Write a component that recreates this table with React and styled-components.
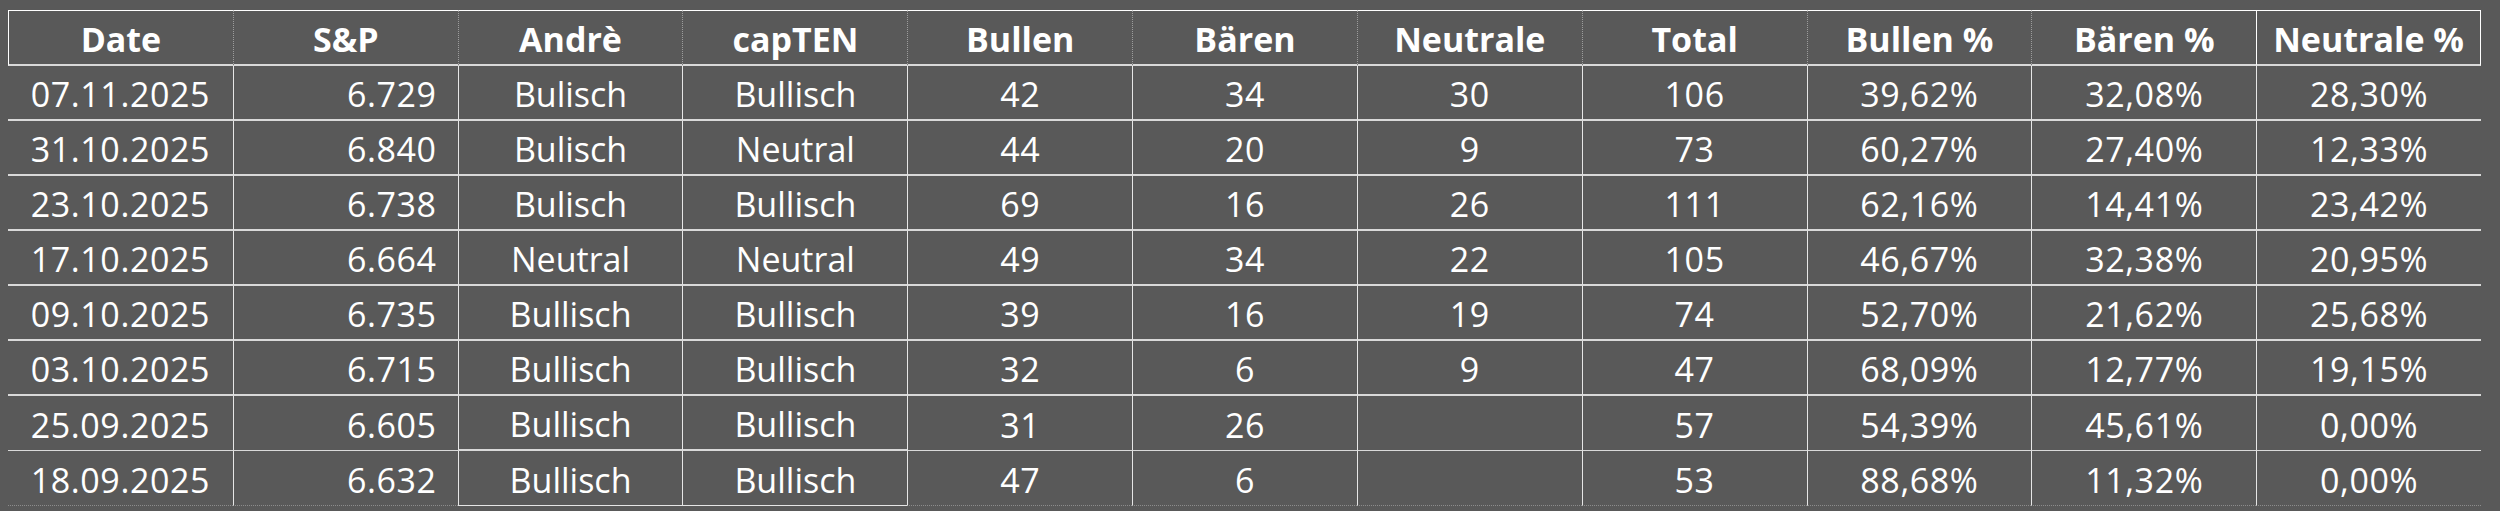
import React from "react";
import styled, { createGlobalStyle } from "styled-components";

const GlobalStyle = createGlobalStyle`
  html, body {
    margin: 0;
    padding: 0;
    background: #595959;
  }
  body {
    font-family: "Open Sans", "Liberation Sans", sans-serif;
    color: #ffffff;
  }
`;

const Page = styled.div`
  padding: 10px 0 0 8px;
  width: 2500px;
  height: 511px;
  box-sizing: border-box;
  background: #595959;
`;

const Sheet = styled.div`
  display: grid;
  grid-template-columns: repeat(11, 1fr);
  width: 2473px;
`;

const HeaderCell = styled.div`
  box-sizing: border-box;
  height: 56px;
  display: flex;
  align-items: center;
  justify-content: center;
  padding-top: 2px;
  font-size: 34px;
  font-weight: 700;
  white-space: nowrap;
  border-top: 1px solid #ffffff;
  border-bottom: 2px solid #d9d9d9;
  border-left: ${(p) =>
    p.$first || p.$boxed ? "1px solid #ffffff" : "1px dotted #9c9c9c"};
  border-right: ${(p) => (p.$boxed ? "1px solid #ffffff" : "0")};
`;

const edgeStyles = {
  thick: "2px solid #d9d9d9",
  thin: "1px solid #d9d9d9",
  dotted: "1px dotted #8c8c8c",
  solid: "1px solid #e6e6e6",
};

const DataCell = styled.div`
  box-sizing: border-box;
  height: 55px;
  display: flex;
  align-items: center;
  justify-content: ${(p) => (p.$right ? "flex-end" : "center")};
  padding: 3px ${(p) => (p.$right ? "21px" : "0")} 0 0;
  font-size: 34px;
  font-weight: 400;
  letter-spacing: ${(p) => (p.$numeric ? "0.6px" : "0")};
  white-space: nowrap;
  border-left: ${(p) => (p.$first ? "0" : "1px solid #e6e6e6")};
  border-bottom: ${(p) => edgeStyles[p.$edge]};
`;

const headers = [
  "Date",
  "S&P",
  "Andrè",
  "capTEN",
  "Bullen",
  "Bären",
  "Neutrale",
  "Total",
  "Bullen %",
  "Bären %",
  "Neutrale %",
];

const rows = [
  ["07.11.2025", "6.729", "Bulisch", "Bullisch", "42", "34", "30", "106", "39,62%", "32,08%", "28,30%"],
  ["31.10.2025", "6.840", "Bulisch", "Neutral", "44", "20", "9", "73", "60,27%", "27,40%", "12,33%"],
  ["23.10.2025", "6.738", "Bulisch", "Bullisch", "69", "16", "26", "111", "62,16%", "14,41%", "23,42%"],
  ["17.10.2025", "6.664", "Neutral", "Neutral", "49", "34", "22", "105", "46,67%", "32,38%", "20,95%"],
  ["09.10.2025", "6.735", "Bullisch", "Bullisch", "39", "16", "19", "74", "52,70%", "21,62%", "25,68%"],
  ["03.10.2025", "6.715", "Bullisch", "Bullisch", "32", "6", "9", "47", "68,09%", "12,77%", "19,15%"],
  ["25.09.2025", "6.605", "Bullisch", "Bullisch", "31", "26", "", "57", "54,39%", "45,61%", "0,00%"],
  ["18.09.2025", "6.632", "Bullisch", "Bullisch", "47", "6", "", "53", "88,68%", "11,32%", "0,00%"],
];

function edgeFor(rowIndex, colIndex) {
  const opinionCol = colIndex === 2 || colIndex === 3;
  if (rowIndex === rows.length - 1) return opinionCol ? "solid" : "dotted";
  if (rowIndex === rows.length - 2) return opinionCol ? "thick" : "thin";
  return "thick";
}

export default function App() {
  return (
    <>
      <GlobalStyle />
      <Page>
        <Sheet>
          {headers.map((h, i) => (
            <HeaderCell key={h} $first={i === 0} $boxed={i === headers.length - 1}>
              {h}
            </HeaderCell>
          ))}
          {rows.map((row, r) =>
            row.map((value, c) => (
              <DataCell
                key={`${r}-${c}`}
                $first={c === 0}
                $right={c === 1}
                $numeric={c !== 2 && c !== 3}
                $edge={edgeFor(r, c)}
              >
                {value}
              </DataCell>
            ))
          )}
        </Sheet>
      </Page>
    </>
  );
}
